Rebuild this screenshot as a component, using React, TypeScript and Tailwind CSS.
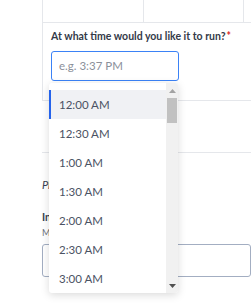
import React from "react";

const times = ["12:00 AM", "12:30 AM", "1:00 AM", "1:30 AM", "2:00 AM", "2:30 AM", "3:00 AM"];

export default function App() {
  return (
    <div className="relative w-[251px] h-[305px] overflow-hidden bg-white" style={{ fontFamily: 'Lato, "Open Sans", sans-serif' }}>
      <div className="pl-[42px]">
        <div className="border-l border-b border-[#e5e7eb] h-[101px] flex flex-col">
          <div className="flex h-[23px] border-b border-[#e5e7eb]">
            <div className="w-[101px] border-r border-[#e5e7eb]" />
            <div className="w-[100px] border-r border-[#e5e7eb]" />
            <div className="flex-1" />
          </div>
          <div className="pl-[8px] pt-[6px]">
            <div className="text-[10.5px] font-bold text-[#333a48] leading-[14px] whitespace-nowrap">
              At what time would you like it to run?<span className="text-[#dc2626] ml-[1px]">*</span>
            </div>
            <div className="mt-[8px] w-[128px] h-[30px] rounded-[3px] border-[1.5px] border-[#3b82f6] flex items-center pl-[7px] text-[11.5px] text-[#8b909a]">
              e.g. 3:37 PM
            </div>
          </div>
        </div>
        <div className="h-[52px] border-b border-[#e5e7eb]" />
        <div className="pt-[25px]">
          <div className="text-[11px] italic text-[#374151] leading-[14px] whitespace-nowrap">Please provide details</div>
          <div className="mt-[18px] text-[10.5px] font-bold text-[#374151] leading-[14px] whitespace-nowrap">Instructions</div>
          <div className="mt-[3px] text-[9px] text-[#6b7280] leading-[12px] whitespace-nowrap">Max 500 characters</div>
          <div className="mt-[5px] h-[33px] rounded-[3px] border border-[#a3aec2]" />
        </div>
      </div>

      <div className="absolute left-[49px] top-[83px] w-[129px] h-[210px] bg-white rounded-[3px] shadow-[0_2px_8px_rgba(0,0,0,0.15)] flex overflow-hidden">
        <div className="flex-1 pt-[7px]">
          {times.map((t, i) => (
            <div
              key={t}
              className={
                i === 0
                  ? "h-[29px] flex items-center pl-[8px] border-l-2 border-[#2563eb] bg-[#f0f1f4] text-[11.5px] text-[#4b5263]"
                  : "h-[29px] flex items-center pl-[10px] text-[11.5px] text-[#4b5263]"
              }
            >
              {t}
            </div>
          ))}
        </div>
        <div className="w-[12px] bg-[#f1f1f1] flex flex-col items-center">
          <div className="h-[15px] flex items-center justify-center">
            <svg width="7" height="4" viewBox="0 0 7 4"><path d="M3.5 0 L7 4 L0 4 Z" fill="#a3a3a3" /></svg>
          </div>
          <div className="w-[10px] h-[25px] bg-[#c1c1c1]" />
          <div className="flex-1" />
          <div className="h-[15px] flex items-center justify-center">
            <svg width="7" height="4" viewBox="0 0 7 4"><path d="M0 0 L7 0 L3.5 4 Z" fill="#505050" /></svg>
          </div>
        </div>
      </div>
    </div>
  );
}
